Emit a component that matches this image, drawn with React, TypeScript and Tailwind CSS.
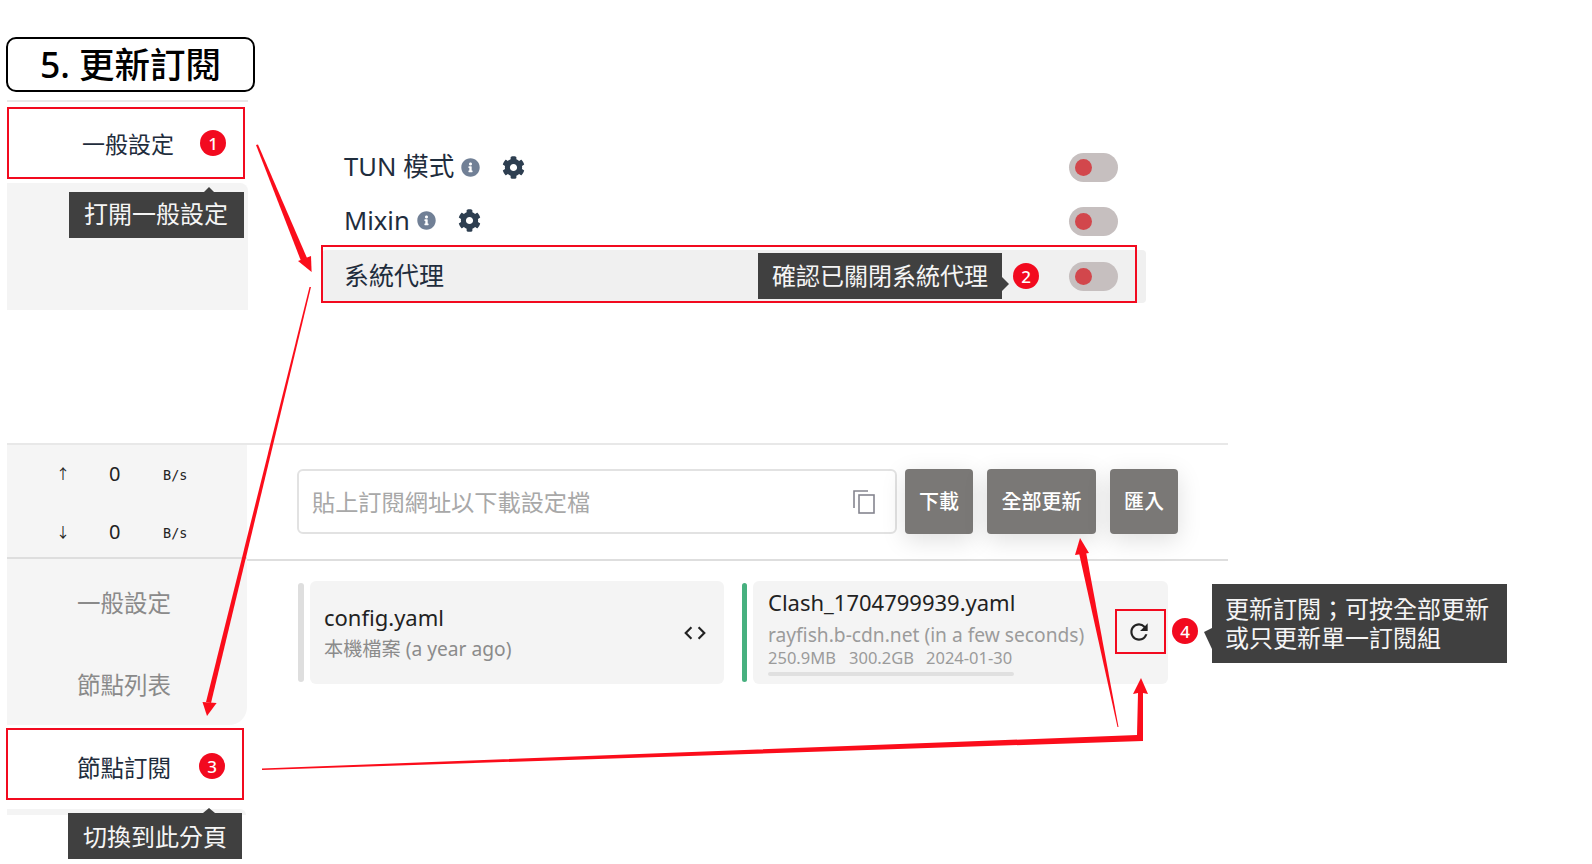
import { FaCog, FaInfoCircle } from 'react-icons/fa'
import { MdCode, MdRefresh } from 'react-icons/md'

const font = 'font-["Noto_Sans","Noto_Sans_CJK_TC",sans-serif]'

const Toggle = () => (
    <div className="flex h-[29px] w-[49px] items-center rounded-full bg-[#c6bfbf] pl-[6px]">
        <div className="h-[17px] w-[17px] rounded-full bg-[#d2474c]" />
    </div>
)

const Badge = ({ n, className }: { n: number; className: string }) => (
    <div className={`absolute flex h-[26px] w-[26px] items-center justify-center rounded-full bg-[#f20a1f] text-[17px] font-medium leading-none text-white ${className}`}>
        {n}
    </div>
)

const Tip = ({ className, children }: { className: string; children: React.ReactNode }) => (
    <div className={`absolute flex items-center bg-[#404040] text-[24px] leading-[29px] text-[#f5f5f5] ${className}`}>
        {children}
    </div>
)

const RedBox = ({ className }: { className: string }) => (
    <div className={`absolute border-2 border-[#f20a1f] ${className}`} />
)

const Arrows = () => (
    <svg className="pointer-events-none absolute left-0 top-0" width="1592" height="864">
        <g fill="#fb0d1b">
            <polygon points="256,145 258,144.5 307,258 301,261" />
            <polygon points="311.6,272 298,261 311,256" />
            <polygon points="309.5,287 311,287 211,703 206,702" />
            <polygon points="207,716 202.5,702 216.6,703" />
            <polygon points="1117.5,727 1118.5,727 1086,552 1079,553" />
            <polygon points="1080,538 1075,555 1089,553" />
            <polygon points="262,768.5 1137,735 1138,693 1133,694 1141,678 1148,694 1143,693 1143,741 262,770" />
        </g>
        <g fill="#404040">
            <polygon points="209,187 203,193 215,193" />
            <polygon points="1009,284 1002,277 1002,291" />
            <polygon points="1204,632 1212,628 1212,649" />
            <polygon points="209,808 203,813 215,813" />
        </g>
    </svg>
)

const CopyIcon = () => (
    <svg width="22" height="24" viewBox="0 0 22 24" fill="none" stroke="#85858f" strokeWidth="1.6">
        <path d="M1 18V1H15" />
        <rect x="6" y="5" width="15" height="18" />
    </svg>
)

const SettingRow = ({ label, withIcons, shaded, className }: { label: string; withIcons?: boolean; shaded?: boolean; className: string }) => (
    <div className={`flex items-center justify-between pl-[22px] pr-[28px] ${shaded ? 'rounded-sm bg-[#f0f0f0]' : ''} ${className}`}>
        <div className={`flex items-center text-[#1f2d3d] ${withIcons ? 'text-[25.6px]' : 'pb-[2px] text-[25px]'}`}>
            <span>{label}</span>
            {withIcons && (
                <>
                    <FaInfoCircle className="ml-[7px] text-[19px] text-[#718096]" />
                    <FaCog className="ml-[22px] text-[23px] text-[#2d3e50]" />
                </>
            )}
        </div>
        <Toggle />
    </div>
)

const Button = ({ label, width }: { label: string; width: string }) => (
    <div className={`flex h-[65px] items-center justify-center rounded bg-[#7a7876] text-[20px] font-medium text-white shadow-[0_6px_24px_rgba(0,0,0,0.13)] ${width}`}>
        {label}
    </div>
)

const Speed = ({ arrow, className }: { arrow: string; className?: string }) => (
    <div className={`flex h-[35px] items-center ${className ?? ''}`}>
        <span className="w-[53px] text-[14px]">{arrow}</span>
        <span className="w-[54px] text-[20px]">0</span>
        <span className='pt-[3px] font-["DejaVu_Sans_Mono",monospace] text-[13.5px]'>B/s</span>
    </div>
)

export default function App() {
    return (
        <div className={`relative h-[864px] w-[1592px] overflow-hidden bg-white ${font}`}>
            <div className="pl-[6px] pt-[37px]">
                <div className="flex h-[55px] w-[249px] items-center justify-center rounded-[10px] border-2 border-black text-[35.5px] font-medium leading-none text-black">
                    5. 更新訂閱
                </div>
            </div>

            <div className="mt-[8px] flex pl-[7px]">
                <div className="w-[241px] border-t-2 border-[#e8e8e8]">
                    <div className="flex h-[81px] items-center pl-[75px] pt-[4px] text-[23px] text-[#1f2d3d]">一般設定</div>
                    <div className="h-[127px] rounded-tr-lg bg-[#f4f4f4]" />
                </div>
                <div className="ml-[74px] w-[824px] pt-[41px]">
                    <SettingRow label="TUN 模式" withIcons className="h-[53px]" />
                    <SettingRow label="Mixin" withIcons className="mt-[-1px] h-[56px]" />
                    <SettingRow label="系統代理" shaded className="mt-[1px] h-[53px]" />
                </div>
            </div>

            <div className="ml-[7px] mt-[133px] flex w-[1221px] border-t-2 border-[#e8e8e8]">
                <div className="w-[240px]">
                    <div className="h-[114px] border-b-2 border-[#dedede] bg-[#f5f5f5] pl-[49px] pt-[11px] text-[#222]">
                        <Speed arrow="↑" />
                        <Speed arrow="↓" className="mt-[23px]" />
                    </div>
                    <div className="h-[166px] rounded-br-[18px] bg-[#f5f5f5] pl-[70px] pt-[25px] text-[23.5px] text-[#8a8a8a]">
                        <div className="flex h-[40px] items-center">一般設定</div>
                        <div className="mt-[42px] flex h-[40px] items-center">節點列表</div>
                    </div>
                </div>
                <div className="flex-1">
                    <div className="flex h-[116px] items-start gap-[14px] border-b-2 border-[#dedede] pl-[50px] pt-[24px]">
                        <div className="flex h-[65px] w-[600px] items-center justify-between rounded-md border-2 border-[#e2e2e2] pl-[13px] pr-[20px] text-[23.2px] text-[#a8a8a8]">
                            <span className="pt-[2px]">貼上訂閱網址以下載設定檔</span>
                            <CopyIcon />
                        </div>
                        <Button label="下載" width="ml-[-6px] w-[68px]" />
                        <Button label="全部更新" width="w-[109px]" />
                        <Button label="匯入" width="w-[68px]" />
                    </div>
                    <div className="flex pl-[51px] pt-[20px]">
                        <div className="mt-[2px] h-[99px] w-[6px] rounded-sm bg-[#dedede]" />
                        <div className="ml-[6px] flex h-[103px] w-[414px] items-center justify-between rounded-md bg-[#f4f4f4] pl-[14px] pr-[16px]">
                            <div>
                                <div className="text-[22px] leading-[30px] text-[#222]">config.yaml</div>
                                <div className="mt-[3px] text-[19.2px] leading-[28px] text-[#8b8b8b]">本機檔案 (a year ago)</div>
                            </div>
                            <MdCode className="text-[26px] text-[#222]" />
                        </div>
                        <div className="ml-[18px] mt-[2px] h-[99px] w-[5px] rounded-sm bg-[#47b07f]" />
                        <div className="ml-[6px] flex h-[103px] w-[415px] items-center justify-between rounded-md bg-[#f4f4f4] pl-[15px] pr-[16px]">
                            <div className="mb-[3px] w-[316px] whitespace-nowrap">
                                <div className="text-[22px] leading-[30px] text-[#222]">Clash_1704799939.yaml</div>
                                <div className="mt-[3px] text-[19.2px] leading-[30px] text-[#9b9b9b]">rayfish.b-cdn.net (in a few seconds)</div>
                                <div className="mt-[-3px] flex text-[16.5px] leading-[22px] text-[#9b9b9b]">
                                    <span className="w-[81px]">250.9MB</span>
                                    <span className="w-[77px]">300.2GB</span>
                                    <span>2024-01-30</span>
                                </div>
                                <div className="mt-[3px] h-[4px] w-[246px] rounded-full bg-[#e0e0e0]" />
                            </div>
                            <MdRefresh className="mb-[2px] text-[26px] text-[#222]" />
                        </div>
                    </div>
                </div>
            </div>

            <div className="ml-[7px] mt-[-2px] w-[239px]">
                <div className="flex h-[86px] items-center pl-[70px] pt-[6px] text-[23.5px] text-[#1f2d3d]">節點訂閱</div>
                <div className="h-[6px] rounded-tr-[18px] bg-[#f4f4f4]" />
            </div>

            <Arrows />

            <RedBox className="left-[7px] top-[107px] h-[72px] w-[238px]" />
            <RedBox className="left-[321px] top-[245px] h-[58px] w-[816px]" />
            <RedBox className="left-[6px] top-[728px] h-[72px] w-[238px]" />
            <RedBox className="left-[1115px] top-[609px] h-[45px] w-[51px]" />

            <Badge n={1} className="left-[200px] top-[130px]" />
            <Badge n={2} className="left-[1013px] top-[263px]" />
            <Badge n={3} className="left-[199px] top-[753px]" />
            <Badge n={4} className="left-[1172px] top-[618px]" />

            <Tip className="left-[69px] top-[192px] h-[46px] w-[175px] pb-[4px] pl-[15px]">打開一般設定</Tip>
            <Tip className="left-[758px] top-[253px] h-[46px] w-[244px] pb-[2px] pl-[14px]">確認已關閉系統代理</Tip>
            <Tip className="left-[68px] top-[813px] h-[46px] w-[174px] pl-[15px]">切換到此分頁</Tip>
            <Tip className="left-[1212px] top-[584px] h-[79px] w-[295px] pb-[2px] pl-[13px]">
                <div className="whitespace-nowrap">
                    <div>{'更新訂閱\uFF1B可按全部更新'}</div>
                    <div>或只更新單一訂閱組</div>
                </div>
            </Tip>
        </div>
    )
}
